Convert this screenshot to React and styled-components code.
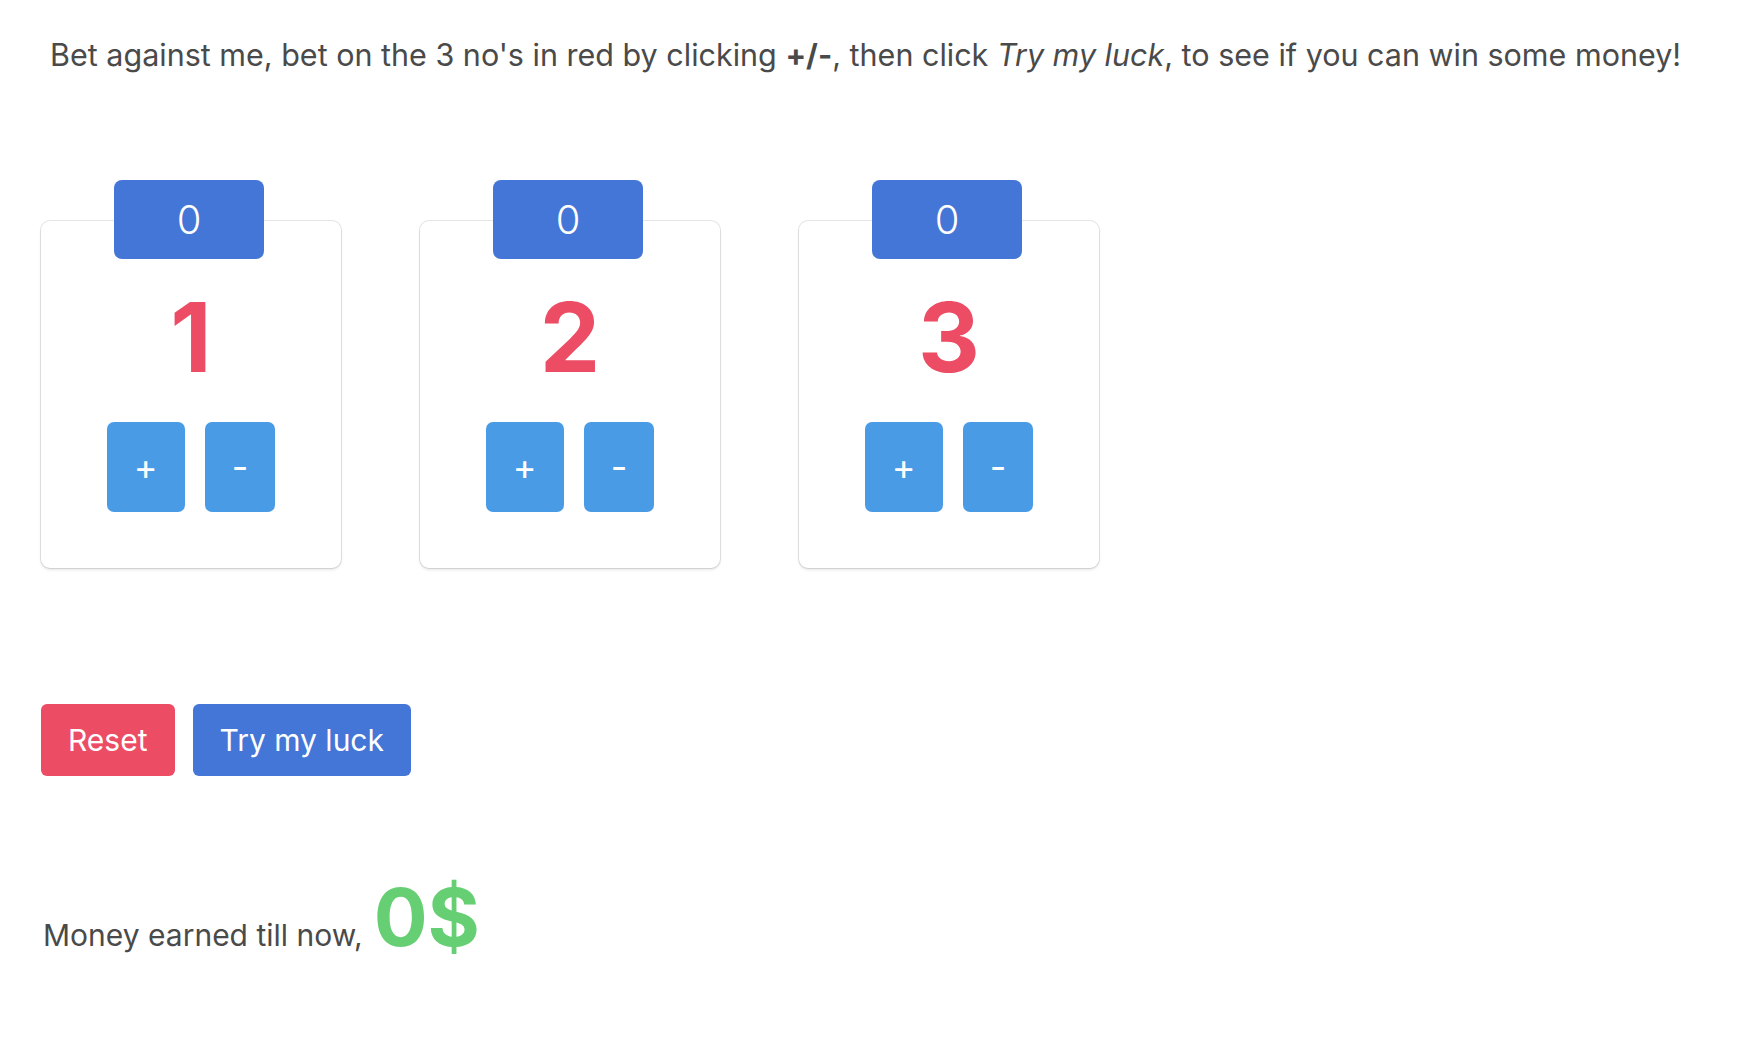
import React, { useState } from 'react';
import styled, { createGlobalStyle } from 'styled-components';

const GlobalStyle = createGlobalStyle`
  html, body {
    margin: 0;
    padding: 0;
    background: #ffffff;
  }
  body {
    font-family: Inter, "Noto Sans", "Liberation Sans", sans-serif;
    color: #4a4a4a;
  }
  * {
    box-sizing: border-box;
  }
`;

const Page = styled.main`
  display: flex;
  flex-direction: column;
  align-items: flex-start;
  padding: 32px 0 0 41px;
`;

const Intro = styled.p`
  margin: 0 0 0 9px;
  font-size: 30.5px;
  line-height: 45px;
  color: #4a4a4a;
  white-space: nowrap;
`;

const CardRow = styled.section`
  display: flex;
  gap: 79px;
  margin-top: 144px;
`;

const Card = styled.div`
  display: flex;
  flex-direction: column;
  align-items: center;
  width: 300px;
  padding-bottom: 56px;
  background: #ffffff;
  border-radius: 9px;
  box-shadow: 0 2px 3px rgba(10, 10, 10, 0.1), 0 0 0 1px rgba(10, 10, 10, 0.1);
`;

const Badge = styled.div`
  display: flex;
  align-items: center;
  justify-content: center;
  width: 150px;
  height: 79px;
  margin: -41px 4px 0 0;
  background: #4376d6;
  border-radius: 8px;
  color: #ffffff;
  font-size: 40px;
  font-weight: 300;
`;

const BigNumber = styled.div`
  margin-top: 30px;
  font-size: 96px;
  line-height: 96px;
  font-weight: 700;
  color: #ec4d65;
`;

const StepRow = styled.div`
  display: flex;
  gap: 20px;
  margin-top: 37px;
`;

const StepButton = styled.button`
  height: 90px;
  padding: 0 27px;
  border: none;
  border-radius: 7px;
  background: #4a9be5;
  color: #ffffff;
  font-family: inherit;
  font-size: 36px;
  font-weight: 400;
  cursor: pointer;
`;

const ActionRow = styled.div`
  display: flex;
  gap: 18px;
  margin-top: 136px;
`;

const ActionButton = styled.button`
  height: 72px;
  padding: 0 27px;
  border: none;
  border-radius: 6px;
  background: ${({ tone }) => (tone === 'danger' ? '#ec4d65' : '#4376d6')};
  color: #ffffff;
  font-family: inherit;
  font-size: 30px;
  cursor: pointer;
`;

const Earnings = styled.p`
  margin: 93px 0 0 2px;
  font-size: 30px;
  line-height: 1.2;
  color: #4a4a4a;
`;

const Amount = styled.span`
  margin-left: 11px;
  font-size: 80px;
  font-weight: 700;
  color: #66cf73;
`;

const NumberCard = ({ label, bet, onUp, onDown }) => (
  <Card>
    <Badge>{bet}</Badge>
    <BigNumber>{label}</BigNumber>
    <StepRow>
      <StepButton onClick={onUp}>+</StepButton>
      <StepButton onClick={onDown}>-</StepButton>
    </StepRow>
  </Card>
);

export default function App() {
  const [bets, setBets] = useState([0, 0, 0]);
  const [money] = useState(0);

  const change = (i, d) =>
    setBets((b) => b.map((v, j) => (j === i ? Math.max(0, v + d) : v)));

  return (
    <Page>
      <GlobalStyle />
      <Intro>
        Bet against me, bet on the 3 no's in red by clicking <strong>+/-</strong>, then click{' '}
        <em>Try my luck</em>, to see if you can win some money!
      </Intro>
      <CardRow>
        {[1, 2, 3].map((n, i) => (
          <NumberCard
            key={n}
            label={n}
            bet={bets[i]}
            onUp={() => change(i, 1)}
            onDown={() => change(i, -1)}
          />
        ))}
      </CardRow>
      <ActionRow>
        <ActionButton tone="danger" onClick={() => setBets([0, 0, 0])}>
          Reset
        </ActionButton>
        <ActionButton>Try my luck</ActionButton>
      </ActionRow>
      <Earnings>
        Money earned till now,<Amount>{money}$</Amount>
      </Earnings>
    </Page>
  );
}
